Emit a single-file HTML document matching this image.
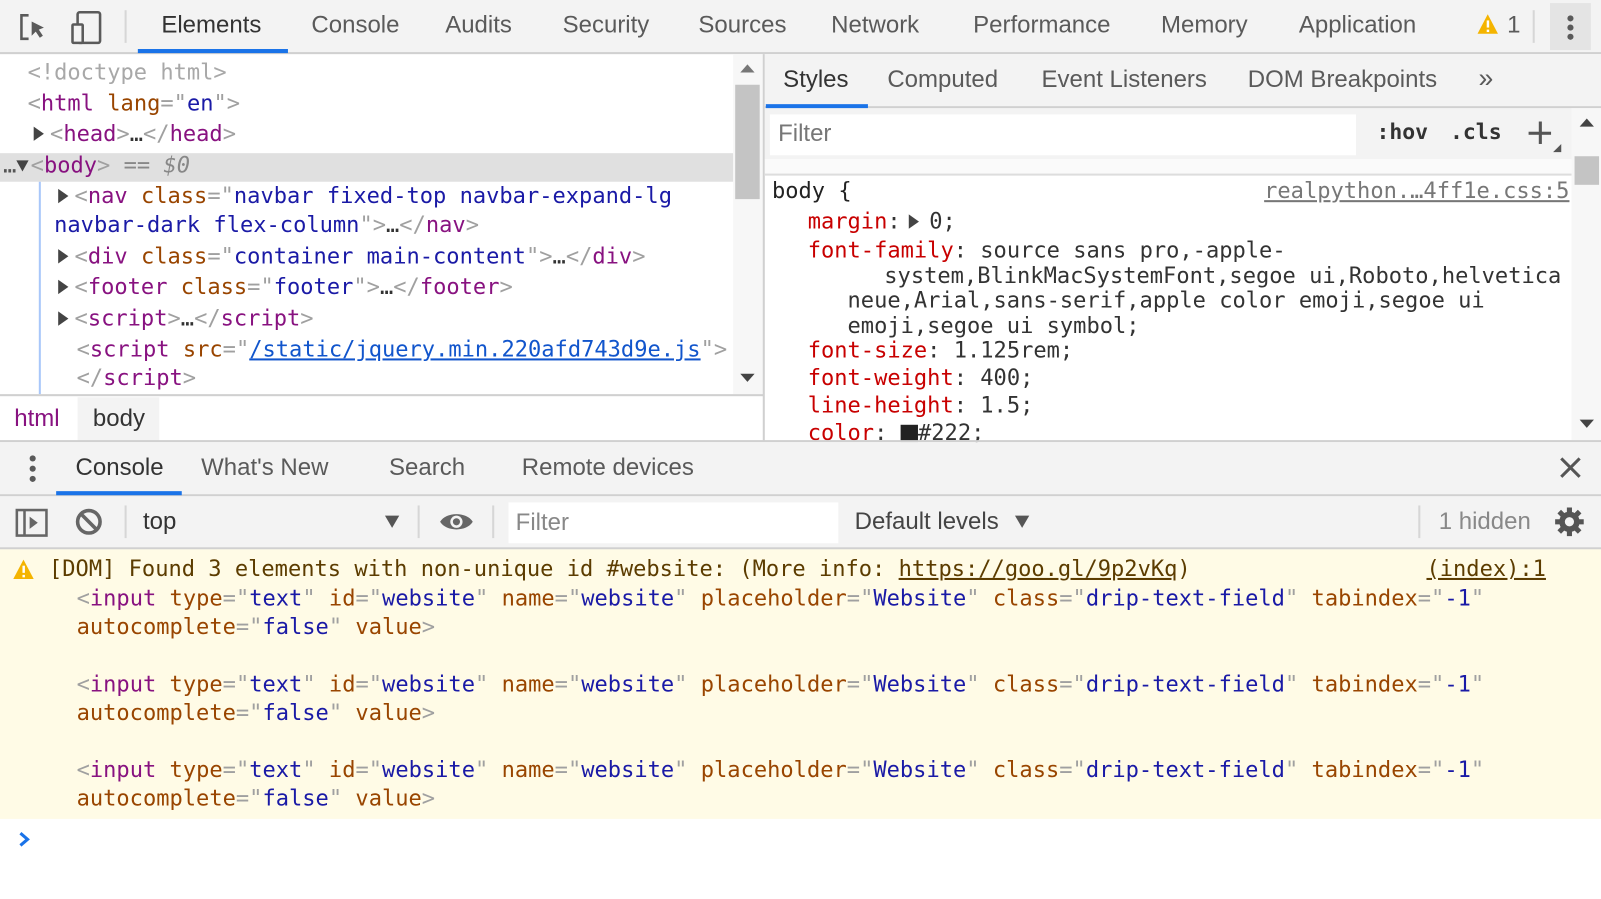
<!DOCTYPE html>
<html><head><meta charset="utf-8"><style>
*{margin:0;padding:0;box-sizing:border-box}
html,body{width:1601px;height:898px;overflow:hidden;background:#fff}
#w{position:absolute;left:0;top:0;width:1568px;height:880px;transform:scale(1.0211);transform-origin:0 0;font-family:"Liberation Sans","DejaVu Sans",sans-serif;color:#333}
.a{position:absolute;white-space:pre}
.m{font-family:"DejaVu Sans Mono","Liberation Mono",monospace;font-size:21.6px}
.ui{font-size:23.5px;color:#5a5a5a}
.t{color:#881280}.an{color:#994500}.av{color:#1a1aa6}.p{color:#a0a0a0}.pr{color:#c80000}
.bar{position:absolute;background:#f3f3f3;border-bottom:2px solid #d0d0d0}
.ul{position:absolute;height:4px;background:#1a73e8}
.tr{display:inline-block;width:0;height:0;border-top:7px solid transparent;border-bottom:7px solid transparent;border-left:10px solid #444;margin-right:6px;vertical-align:0}
.td{display:inline-block;width:0;height:0;border-left:6px solid transparent;border-right:6px solid transparent;border-top:11px solid #444;margin-right:2px;vertical-align:1px}
</style></head><body><div id="w">
<!-- top toolbar -->
<div class="bar" style="left:0;top:0;width:1601px;height:53px"></div>
<svg class="a" style="left:18px;top:12px" width="30" height="30" viewBox="0 0 30 30"><path d="M10 3H3v23h7" fill="none" stroke="#5a5a5a" stroke-width="2.5"/><path d="M13 9l12 6-5 2 4 6-3 2-4-6-4 4z" fill="#5a5a5a"/></svg>
<svg class="a" style="left:68px;top:10px" width="34" height="34" viewBox="0 0 34 34"><rect x="8" y="2" width="22" height="30" rx="2" fill="none" stroke="#5a5a5a" stroke-width="2.5"/><rect x="3" y="14" width="10" height="18" rx="1" fill="#f3f3f3" stroke="#5a5a5a" stroke-width="2.5"/></svg>
<div class="a" style="left:122px;top:10px;width:2px;height:32px;background:#d6d6d6"></div>
<div class="a ui" style="left:158px;top:11px;color:#333">Elements</div>
<div class="ul" style="left:135px;top:48px;width:147px"></div>
<div class="a ui" style="left:305px;top:11px">Console</div>
<div class="a ui" style="left:436px;top:11px">Audits</div>
<div class="a ui" style="left:551px;top:11px">Security</div>
<div class="a ui" style="left:684px;top:11px">Sources</div>
<div class="a ui" style="left:814px;top:11px">Network</div>
<div class="a ui" style="left:953px;top:11px">Performance</div>
<div class="a ui" style="left:1137px;top:11px">Memory</div>
<div class="a ui" style="left:1272px;top:11px">Application</div>
<svg class="a" style="left:1446px;top:13px" width="22" height="22" viewBox="0 0 22 22"><path d="M11 1L21 20H1z" fill="#f4b400"/><rect x="10" y="7" width="2.4" height="7" fill="#fff"/><rect x="10" y="16" width="2.4" height="2.4" fill="#fff"/></svg>
<div class="a ui" style="left:1476px;top:11px">1</div>
<div class="a" style="left:1501px;top:10px;width:2px;height:32px;background:#d6d6d6"></div>
<div class="a" style="left:1518px;top:3px;width:40px;height:46px;background:#e4e4e4"></div>
<div class="a" style="left:1535px;top:15px;width:6px;height:6px;border-radius:3px;background:#5a5a5a;box-shadow:0 9px 0 #5a5a5a,0 18px 0 #5a5a5a"></div>

<!-- elements pane -->
<div class="a" style="left:0;top:150px;width:718px;height:28px;background:#e0e0e0"></div>
<div class="a" style="left:38px;top:178px;width:2px;height:208px;background:#a8c7fa"></div>
<div class="a m" style="left:27px;top:59px;color:#a8a8a8">&lt;!doctype html&gt;</div>
<div class="a m" style="left:27px;top:89px"><span class="p">&lt;</span><span class="t">html</span> <span class="an">lang</span><span class="p">="</span><span class="av">en</span><span class="p">"&gt;</span></div>
<div class="a m" style="left:33px;top:119px"><span class="tr"></span><span class="p">&lt;</span><span class="t">head</span><span class="p">&gt;</span>…<span class="p">&lt;/</span><span class="t">head</span><span class="p">&gt;</span></div>
<div class="a m" style="left:3px;top:150px"><span style="color:#555">…</span><span class="td"></span><span class="p">&lt;</span><span class="t">body</span><span class="p">&gt;</span> <span style="color:#888">== <i>$0</i></span></div>
<div class="a m" style="left:57px;top:180px"><span class="tr"></span><span class="p">&lt;</span><span class="t">nav</span> <span class="an">class</span><span class="p">="</span><span class="av">navbar fixed-top navbar-expand-lg</span></div>
<div class="a m" style="left:53px;top:208px"><span class="av">navbar-dark flex-column</span><span class="p">"&gt;</span>…<span class="p">&lt;/</span><span class="t">nav</span><span class="p">&gt;</span></div>
<div class="a m" style="left:57px;top:239px"><span class="tr"></span><span class="p">&lt;</span><span class="t">div</span> <span class="an">class</span><span class="p">="</span><span class="av">container main-content</span><span class="p">"&gt;</span>…<span class="p">&lt;/</span><span class="t">div</span><span class="p">&gt;</span></div>
<div class="a m" style="left:57px;top:269px"><span class="tr"></span><span class="p">&lt;</span><span class="t">footer</span> <span class="an">class</span><span class="p">="</span><span class="av">footer</span><span class="p">"&gt;</span>…<span class="p">&lt;/</span><span class="t">footer</span><span class="p">&gt;</span></div>
<div class="a m" style="left:57px;top:300px"><span class="tr"></span><span class="p">&lt;</span><span class="t">script</span><span class="p">&gt;</span>…<span class="p">&lt;/</span><span class="t">script</span><span class="p">&gt;</span></div>
<div class="a m" style="left:75px;top:330px"><span class="p">&lt;</span><span class="t">script</span> <span class="an">src</span><span class="p">="</span><span class="av" style="color:#1155cc;text-decoration:underline">/static/jquery.min.220afd743d9e.js</span><span class="p">"&gt;</span></div>
<div class="a m" style="left:75px;top:358px"><span class="p">&lt;/</span><span class="t">script</span><span class="p">&gt;</span></div>
<!-- scrollbar -->
<div class="a" style="left:718px;top:53px;width:29px;height:334px;background:#f7f7f7"></div>
<div class="a" style="left:720px;top:83px;width:24px;height:112px;background:#c4c4c4"></div>
<div class="a" style="left:725px;top:63px;border:7px solid transparent;border-bottom:8px solid #777;border-top:0"></div>
<div class="a" style="left:725px;top:366px;border:7px solid transparent;border-top:8px solid #444;border-bottom:0"></div>
<!-- breadcrumbs -->
<div class="a" style="left:0;top:386px;width:748px;height:2px;background:#d0d0d0"></div>
<div class="a ui" style="left:14px;top:396px;color:#881280">html</div>
<div class="a" style="left:76px;top:389px;width:80px;height:43px;background:#f3f3f3"></div>
<div class="a ui" style="left:91px;top:396px;color:#333">body</div>
<div class="a" style="left:747px;top:53px;width:2px;height:380px;background:#d0d0d0"></div>

<!-- styles pane -->
<div class="bar" style="left:749px;top:53px;width:852px;height:53px"></div>
<div class="a ui" style="left:767px;top:64px;color:#333">Styles</div>
<div class="ul" style="left:750px;top:102px;width:100px"></div>
<div class="a ui" style="left:869px;top:64px">Computed</div>
<div class="a ui" style="left:1020px;top:64px">Event Listeners</div>
<div class="a ui" style="left:1222px;top:64px">DOM Breakpoints</div>
<div class="a ui" style="left:1448px;top:61px;font-size:26px">»</div>
<div class="a" style="left:749px;top:106px;width:852px;height:50px;background:#f3f3f3"></div>
<div class="a" style="left:754px;top:112px;width:574px;height:40px;background:#fff"></div>
<div class="a ui" style="left:762px;top:117px;color:#777">Filter</div>
<div class="a ui" style="left:1348px;top:117px;color:#333;font-weight:bold;font-family:'DejaVu Sans Mono',monospace;font-size:21px">:hov</div>
<div class="a ui" style="left:1420px;top:117px;color:#333;font-weight:bold;font-family:'DejaVu Sans Mono',monospace;font-size:21px">.cls</div>
<div class="a" style="left:1497px;top:129px;width:22px;height:3px;background:#555"></div>
<div class="a" style="left:1507px;top:119px;width:3px;height:22px;background:#555"></div>
<div class="a" style="left:1521px;top:141px;border-left:8px solid transparent;border-bottom:8px solid #555"></div>
<div class="a" style="left:749px;top:156px;width:790px;height:16px;background:#fafafa;border-bottom:2px solid #ddd"></div>
<div class="a m" style="left:756px;top:175px;color:#222">body {</div>
<div class="a m" style="left:1238px;top:175px;color:#777;text-decoration:underline">realpython.…4ff1e.css:5</div>
<div class="a m" style="left:791px;top:205px"><span class="pr">margin</span>:<span class="tr" style="margin-left:8px;margin-right:10px"></span>0;</div>
<div class="a m" style="left:791px;top:233px"><span class="pr">font-family</span>: source sans pro,-apple-</div>
<div class="a m" style="left:866px;top:258px">system,BlinkMacSystemFont,segoe ui,Roboto,helvetica</div>
<div class="a m" style="left:830px;top:282px">neue,Arial,sans-serif,apple color emoji,segoe ui</div>
<div class="a m" style="left:830px;top:307px">emoji,segoe ui symbol;</div>
<div class="a m" style="left:791px;top:331px"><span class="pr">font-size</span>: 1.125rem;</div>
<div class="a m" style="left:791px;top:358px"><span class="pr">font-weight</span>: 400;</div>
<div class="a m" style="left:791px;top:385px"><span class="pr">line-height</span>: 1.5;</div>
<div class="a m" style="left:791px;top:412px"><span class="pr">color</span>: <span style="display:inline-block;width:17px;height:17px;background:#222;vertical-align:-2px"></span>#222;</div>
<div class="a" style="left:1539px;top:106px;width:30px;height:326px;background:#f7f7f7"></div>
<div class="a" style="left:1542px;top:153px;width:24px;height:28px;background:#c4c4c4"></div>
<div class="a" style="left:1547px;top:116px;border:7px solid transparent;border-bottom:8px solid #444;border-top:0"></div>
<div class="a" style="left:1547px;top:411px;border:7px solid transparent;border-top:8px solid #444;border-bottom:0"></div>

<!-- drawer -->
<div class="a" style="left:0;top:431px;width:1601px;height:2px;background:#d0d0d0"></div>
<div class="bar" style="left:0;top:433px;width:1601px;height:53px"></div>
<div class="a" style="left:29px;top:446px;width:6px;height:6px;border-radius:3px;background:#5a5a5a;box-shadow:0 10px 0 #5a5a5a,0 20px 0 #5a5a5a"></div>
<div class="a ui" style="left:74px;top:444px;color:#333">Console</div>
<div class="ul" style="left:55px;top:481px;width:123px"></div>
<div class="a ui" style="left:197px;top:444px">What's New</div>
<div class="a ui" style="left:381px;top:444px">Search</div>
<div class="a ui" style="left:511px;top:444px">Remote devices</div>
<svg class="a" style="left:1527px;top:447px" width="22" height="22" viewBox="0 0 22 22"><path d="M2 2L20 20M20 2L2 20" stroke="#555" stroke-width="3"/></svg>
<div class="bar" style="left:0;top:486px;width:1601px;height:52px"></div>
<svg class="a" style="left:15px;top:498px" width="32" height="28" viewBox="0 0 32 28"><rect x="1.5" y="1.5" width="29" height="25" fill="none" stroke="#666" stroke-width="2.5"/><path d="M9 2v24" stroke="#666" stroke-width="2.5"/><path d="M14 8l8 6-8 6z" fill="#666"/></svg>
<svg class="a" style="left:73px;top:497px" width="28" height="28" viewBox="0 0 28 28"><circle cx="14" cy="14" r="11" fill="none" stroke="#666" stroke-width="3.5"/><path d="M7 7l14 14" stroke="#666" stroke-width="3.5"/></svg>
<div class="a" style="left:122px;top:495px;width:2px;height:32px;background:#d6d6d6"></div>
<div class="a ui" style="left:140px;top:497px;color:#333">top</div>
<div class="a" style="left:377px;top:505px;border:7px solid transparent;border-top:12px solid #555;border-bottom:0"></div>
<div class="a" style="left:409px;top:495px;width:2px;height:32px;background:#d6d6d6"></div>
<svg class="a" style="left:430px;top:500px" width="34" height="22" viewBox="0 0 34 22"><path d="M1 11C7 1 27 1 33 11C27 21 7 21 1 11z" fill="#666"/><circle cx="17" cy="11" r="6" fill="#f3f3f3"/><circle cx="17" cy="11" r="3.5" fill="#666"/></svg>
<div class="a" style="left:482px;top:495px;width:2px;height:32px;background:#d6d6d6"></div>
<div class="a" style="left:498px;top:492px;width:323px;height:40px;background:#fff"></div>
<div class="a ui" style="left:505px;top:498px;color:#888">Filter</div>
<div class="a ui" style="left:837px;top:497px;color:#444">Default levels</div>
<div class="a" style="left:994px;top:505px;border:7px solid transparent;border-top:12px solid #555;border-bottom:0"></div>
<div class="a" style="left:1389px;top:495px;width:2px;height:32px;background:#d6d6d6"></div>
<div class="a ui" style="left:1409px;top:497px;color:#888">1 hidden</div>
<svg class="a" style="left:1522px;top:496px" width="30" height="30" viewBox="0 0 30 30"><g fill="#555"><circle cx="15" cy="15" r="10"/><g stroke="#555" stroke-width="5"><path d="M15 1v28M1 15h28M5 5l20 20M25 5L5 25"/></g></g><circle cx="15" cy="15" r="4.5" fill="#f3f3f3"/></svg>

<!-- console messages -->
<div class="a" style="left:0;top:538px;width:1601px;height:264px;background:#fffbe6"></div>
<svg class="a" style="left:12px;top:547px" width="22" height="22" viewBox="0 0 22 22"><path d="M11 1L21 20H1z" fill="#f4b400"/><rect x="10" y="7" width="2.4" height="7" fill="#fff"/><rect x="10" y="16" width="2.4" height="2.4" fill="#fff"/></svg>
<div class="a m" style="left:48px;top:545px;color:#5c3c00">[DOM] Found 3 elements with non-unique id #website: (More info: <u>https://goo.gl/9p2vKq</u>)</div>
<div class="a m" style="left:1397px;top:545px;color:#5c3c00;text-decoration:underline">(index):1</div>
<div class="a m" style="left:75px;top:574px"><span class="p">&lt;</span><span class="t">input</span> <span class="an">type</span><span class="p">="</span><span class="av">text</span><span class="p">"</span> <span class="an">id</span><span class="p">="</span><span class="av">website</span><span class="p">"</span> <span class="an">name</span><span class="p">="</span><span class="av">website</span><span class="p">"</span> <span class="an">placeholder</span><span class="p">="</span><span class="av">Website</span><span class="p">"</span> <span class="an">class</span><span class="p">="</span><span class="av">drip-text-field</span><span class="p">"</span> <span class="an">tabindex</span><span class="p">="</span><span class="av">-1</span><span class="p">"</span></div>
<div class="a m" style="left:75px;top:602px"><span class="an">autocomplete</span><span class="p">="</span><span class="av">false</span><span class="p">"</span> <span class="an">value</span><span class="p">&gt;</span></div>
<div class="a m" style="left:75px;top:658px"><span class="p">&lt;</span><span class="t">input</span> <span class="an">type</span><span class="p">="</span><span class="av">text</span><span class="p">"</span> <span class="an">id</span><span class="p">="</span><span class="av">website</span><span class="p">"</span> <span class="an">name</span><span class="p">="</span><span class="av">website</span><span class="p">"</span> <span class="an">placeholder</span><span class="p">="</span><span class="av">Website</span><span class="p">"</span> <span class="an">class</span><span class="p">="</span><span class="av">drip-text-field</span><span class="p">"</span> <span class="an">tabindex</span><span class="p">="</span><span class="av">-1</span><span class="p">"</span></div>
<div class="a m" style="left:75px;top:686px"><span class="an">autocomplete</span><span class="p">="</span><span class="av">false</span><span class="p">"</span> <span class="an">value</span><span class="p">&gt;</span></div>
<div class="a m" style="left:75px;top:742px"><span class="p">&lt;</span><span class="t">input</span> <span class="an">type</span><span class="p">="</span><span class="av">text</span><span class="p">"</span> <span class="an">id</span><span class="p">="</span><span class="av">website</span><span class="p">"</span> <span class="an">name</span><span class="p">="</span><span class="av">website</span><span class="p">"</span> <span class="an">placeholder</span><span class="p">="</span><span class="av">Website</span><span class="p">"</span> <span class="an">class</span><span class="p">="</span><span class="av">drip-text-field</span><span class="p">"</span> <span class="an">tabindex</span><span class="p">="</span><span class="av">-1</span><span class="p">"</span></div>
<div class="a m" style="left:75px;top:770px"><span class="an">autocomplete</span><span class="p">="</span><span class="av">false</span><span class="p">"</span> <span class="an">value</span><span class="p">&gt;</span></div>
<svg class="a" style="left:17px;top:814px" width="14" height="16" viewBox="0 0 14 16"><path d="M3 2l7 6-7 6" fill="none" stroke="#1a73e8" stroke-width="3"/></svg>
</div></body></html>
